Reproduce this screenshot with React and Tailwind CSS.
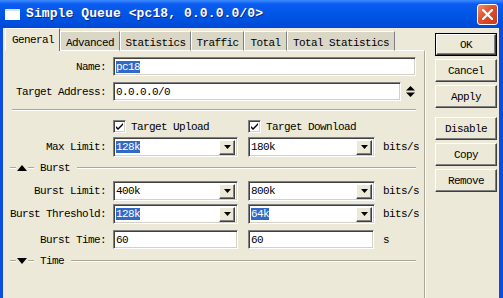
import React from 'react';

// Classic Win XP MikroTik "Simple Queue" dialog.
const MONO = "font-['Liberation_Mono','DejaVu_Sans_Mono',monospace] text-[11px] tracking-[-0.6px] leading-[12px] text-black";

const SUNKEN =
  'bg-white border border-t-[#808080] border-l-[#808080] border-b-white border-r-white shadow-[inset_1px_1px_0_#404040,inset_-1px_-1px_0_#d4d0c8]';

const RAISED =
  'bg-[#ECE9D8] border border-t-white border-l-white border-b-[#404040] border-r-[#404040] shadow-[inset_-1px_-1px_0_#808080]';

const TABS = [
  { label: 'General', w: 'w-[55px]', active: true },
  { label: 'Advanced', w: 'w-[60px]' },
  { label: 'Statistics', w: 'w-[71px]' },
  { label: 'Traffic', w: 'w-[53px]' },
  { label: 'Total', w: 'w-[43px]' },
  { label: 'Total Statistics', w: 'w-[108px]' },
];

function Sel({ children }) {
  return <span className="bg-[#316AC5] text-white">{children}</span>;
}

function Field({ width, height = 'h-[19px]', children, combo }) {
  return (
    <div className={`${SUNKEN} ${width} ${height} flex items-center pl-[2px] pr-[2px]`}>
      <span className="flex-1">{children}</span>
      {combo && (
        <div className={`${RAISED} w-[16px] h-[15px] flex items-center justify-center`}>
          <svg width="7" height="4" viewBox="0 0 7 4">
            <path d="M0 0h7L3.5 4z" fill="#000" />
          </svg>
        </div>
      )}
    </div>
  );
}

function Label({ children }) {
  return <div className="w-[102px] text-right pr-[1px] shrink-0">{children}</div>;
}

function Row({ label, mt, children }) {
  return (
    <div className={`flex items-center ${mt}`}>
      <Label>{label}</Label>
      <div className="ml-[6px] flex items-center">{children}</div>
    </div>
  );
}

function Check({ label }) {
  return (
    <div className="flex items-center">
      <div className={`${SUNKEN} w-[13px] h-[13px] flex items-center justify-center`}>
        <svg width="7" height="7" viewBox="0 0 7 7">
          <path d="M0 3l2 2 5-5v2L2 7 0 5z" fill="#000" />
        </svg>
      </div>
      <span className="ml-[5px]">{label}</span>
    </div>
  );
}

function Etched({ className }) {
  return <div className={`h-[2px] border-t border-t-[#ACA899] border-b border-b-white ${className}`} />;
}

function Section({ label, open, mt }) {
  return (
    <div className={`flex items-center h-[10px] ${mt}`}>
      <Etched className="ml-[5px] w-[6px]" />
      <svg width="10" height="6" viewBox="0 0 10 6" className="mx-[1px]">
        {open ? <path d="M0 6h10L5 0z" fill="#000" /> : <path d="M0 0h10L5 6z" fill="#000" />}
      </svg>
      <Etched className="w-[6px]" />
      <span className="ml-[6px]">{label}</span>
      <Etched className="flex-1 ml-[7px] mr-[8px]" />
    </div>
  );
}

function Button({ label, primary, mt = 'mt-[3px]' }) {
  const inner = (
    <div className={`${RAISED} h-full flex items-center justify-center`}>{label}</div>
  );
  return (
    <div className={`w-[62px] h-[23px] ${mt} ${primary ? 'border border-black' : ''}`}>{inner}</div>
  );
}

export default function App() {
  return (
    <div className={`w-[503px] h-[298px] overflow-hidden flex flex-col bg-[#0a4de0] ${MONO}`}>
      {/* title bar */}
      <div className="h-[28px] shrink-0 flex items-center bg-[linear-gradient(to_bottom,#3d8bff_0px,#0a5cf0_4px,#0055e5_55%,#0049d6_100%)]">
        <div className="ml-[5px] w-[15px] h-[11px] bg-white border-t-[2px] border-t-[#d6e4fa]" />
        <span className="ml-[6px] text-white font-bold text-[13px] tracking-[0.1px] [text-shadow:1px_1px_0_#0a2a8c]">
          Simple Queue &lt;pc18, 0.0.0.0/0&gt;
        </span>
        <div className="ml-auto mr-[5px] w-[21px] h-[21px] rounded-[3px] border border-white bg-[linear-gradient(135deg,#f0906c,#e0502c_45%,#c8381a)] flex items-center justify-center">
          <svg width="11" height="11" viewBox="0 0 11 11">
            <path d="M1 1l9 9M10 1l-9 9" stroke="#fff" strokeWidth="2.2" strokeLinecap="square" />
          </svg>
        </div>
      </div>

      {/* body */}
      <div className="flex-1 flex ml-[3px] mr-[4px] bg-[#ECE9D8] pl-[2px]">
        <div className="w-[420px] flex flex-col">
          {/* tabs */}
          <div className="flex items-end h-[23px]">
            {TABS.map((t) =>
              t.active ? (
                <div
                  key={t.label}
                  className={`${t.w} h-[23px] bg-[#ECE9D8] border-t border-l border-white border-r border-r-[#716F64] pt-[5px] pl-[6px]`}
                >
                  {t.label}
                </div>
              ) : (
                <div
                  key={t.label}
                  className={`${t.w} h-[20px] bg-[#DBD7C7] border-t border-l border-white border-r border-r-[#808080] border-b border-b-white pt-[5px] text-center`}
                >
                  {t.label}
                </div>
              )
            )}
            <div className="flex-1 border-b border-white border-r border-r-[#ACA899] h-px" />
          </div>

          {/* panel */}
          <div className="flex-1 border-r border-r-[#ACA899] shadow-[1px_0_0_#fff] flex flex-col">
            <Row label="Name:" mt="mt-[6px]">
              <Field width="w-[303px]">
                <Sel>pc18</Sel>
              </Field>
            </Row>
            <Row label="Target Address:" mt="mt-[6px]">
              <Field width="w-[288px]">0.0.0.0/0</Field>
              <svg width="9" height="11" viewBox="0 0 9 11" className="ml-[5px]">
                <path d="M0 4.5h9L4.5 0zM0 6.5h9L4.5 11z" fill="#000" />
              </svg>
            </Row>
            <Etched className="mt-[8px] ml-[7px] mr-[8px]" />
            <div className="flex mt-[9px] h-[13px]">
              <div className="ml-[108px] w-[135px]">
                <Check label="Target Upload" />
              </div>
              <Check label="Target Download" />
            </div>
            <Row label="Max Limit:" mt="mt-[4px]">
              <Field width="w-[125px]" height="h-[20px]" combo>
                <Sel>128k</Sel>
              </Field>
              <div className="ml-[10px]">
                <Field width="w-[127px]" height="h-[20px]" combo>180k</Field>
              </div>
              <span className="ml-[8px]">bits/s</span>
            </Row>
            <Section label="Burst" open mt="mt-[6px]" />
            <Row label="Burst Limit:" mt="mt-[8px]">
              <Field width="w-[125px]" height="h-[20px]" combo>400k</Field>
              <div className="ml-[10px]">
                <Field width="w-[127px]" height="h-[20px]" combo>800k</Field>
              </div>
              <span className="ml-[8px]">bits/s</span>
            </Row>
            <Row label="Burst Threshold:" mt="mt-[3px]">
              <Field width="w-[125px]" height="h-[20px]" combo>
                <Sel>128k</Sel>
              </Field>
              <div className="ml-[10px]">
                <Field width="w-[127px]" height="h-[20px]" combo>
                  <Sel>64k</Sel>
                </Field>
              </div>
              <span className="ml-[8px]">bits/s</span>
            </Row>
            <Row label="Burst Time:" mt="mt-[6px]">
              <Field width="w-[125px]">60</Field>
              <div className="ml-[10px]">
                <Field width="w-[126px]">60</Field>
              </div>
              <span className="ml-[9px]">s</span>
            </Row>
            <Section label="Time" mt="mt-[7px]" />
          </div>
        </div>

        {/* buttons */}
        <div className="pl-[10px] pt-[5px] flex flex-col">
          <Button label="OK" primary mt="mt-0" />
          <Button label="Cancel" />
          <Button label="Apply" />
          <Button label="Disable" mt="mt-[9px]" />
          <Button label="Copy" />
          <Button label="Remove" />
        </div>
      </div>
    </div>
  );
}
